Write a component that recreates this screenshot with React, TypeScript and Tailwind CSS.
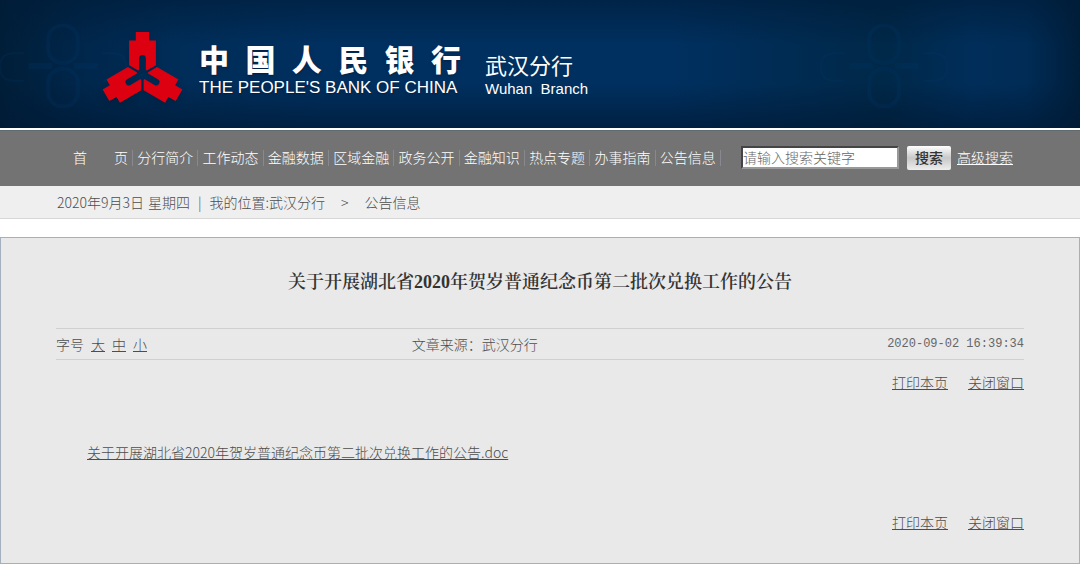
import { useState, type FormEvent } from 'react';

const navItems = ['分行简介', '工作动态', '金融数据', '区域金融', '政务公开', '金融知识', '热点专题', '办事指南', '公告信息'];
const bankName = ['中', '国', '人', '民', '银', '行'];
const fontSizes = ['大', '中', '小'];

// One arm of the emblem, repeated at 120 degree steps round the centre
const arm = 'M-20-126H20v25h20v74L14-12H10v-35q0-10-10-10t-10 10v35h-4L-40-27v-74h20z';

const Logo = () => (
  <svg viewBox="-121 -126 242 209" className="w-[81px] h-[70px] shrink-0 overflow-visible drop-shadow-md" role="img" aria-label="中国人民银行">
    <g fill="#dd0010">
      <path d={arm} />
      <path d={arm} transform="rotate(120)" />
      <path d={arm} transform="rotate(240)" />
    </g>
  </svg>
);

// Faint ornament in the banner background
const Rosette = ({ className }: { className: string }) => (
  <svg viewBox="-75 -65 150 130" className={`absolute top-0 h-[128px] w-[150px] ${className}`} aria-hidden="true">
    <g fill="none" stroke="#003a70" strokeWidth="4" opacity="0.2">
      <rect x="-15" y="-39" width="30" height="38" rx="14" />
      <rect x="-15" y="5" width="30" height="38" rx="14" />
      <path d="M-35 2h24M11 2h24" strokeWidth="6" />
      <path d="M-40-11h-10q-14 0-14 14t14 14h10M40-11h10q14 0 14 14T50 17H40" strokeWidth="2" />
    </g>
  </svg>
);

const Header = () => (
  <header className="relative overflow-hidden h-[130px] pt-1.5 pl-[102px] flex items-center border-b-2 border-white bg-[#002e5e] bg-[linear-gradient(to_bottom,#001c3899,transparent_35%,transparent_65%,#001a36b3),linear-gradient(to_right,#001e38,#00274c_8%,#002d58_16%,#003060_30%,#003060_62%,#002848_82%,#002e5a_90%,#002c56_95%,#001e3a)] text-white">
    <Rosette className="-left-3" />
    <Rosette className="right-[121px]" />
    <Logo />
    <div className="ml-4 mt-1.5 w-[262px] shrink-0">
      <div className="flex justify-between text-3xl leading-9 font-black text-shadow-md">
        {bankName.map((char) => <span key={char}>{char}</span>)}
      </div>
      <div className="text-[17px] leading-6 font-normal whitespace-nowrap text-shadow-md font-['Liberation_Sans',sans-serif]">THE PEOPLE'S BANK OF CHINA</div>
    </div>
    <div className="ml-6 mt-5 shrink-0 font-normal font-['Liberation_Sans','Noto_Sans_CJK_SC',sans-serif]">
      <div className="text-[22px] leading-6">武汉分行</div>
      <div className="text-[15px] leading-5 whitespace-pre">Wuhan  Branch</div>
    </div>
  </header>
);

const NavBar = () => {
  const [keyword, setKeyword] = useState('');

  const handleSubmit = (e: FormEvent) => {
    e.preventDefault();
  };

  return (
    <div className="h-14 pb-0.5 bg-[#737373] border-t border-[#5f6970] flex items-center pl-[73px] text-white font-['Liberation_Sans','Noto_Sans_CJK_SC',sans-serif]">
      <nav className="w-[648px] flex items-center shrink-0 leading-4">
        <a href="#" className="w-[60px] flex justify-between pr-1 border-r border-[#87898f]"><span>首</span><span>页</span></a>
        {navItems.map((item) => (
          <a key={item} href="#" className="flex-1 flex justify-center border-r border-[#87898f]">{item}</a>
        ))}
      </nav>
      <form onSubmit={handleSubmit} className="ml-5 flex items-center">
        <input
          type="text"
          aria-label="请输入搜索关键字"
          placeholder="请输入搜索关键字"
          value={keyword}
          onChange={(e) => setKeyword(e.target.value)}
          className="w-[158px] h-[23px] border-2 border-t-[#444] border-l-[#444] border-b-[#999] border-r-[#999] bg-white text-gray-700 placeholder:text-[#666]"
        />
        <button type="submit" className="ml-2 w-11 h-6 rounded-xs bg-linear-to-b from-white via-[#c8c8c8] to-[#eee] font-medium text-[#333]">搜索</button>
        <a href="#" className="ml-1.5 underline">高级搜索</a>
      </form>
    </div>
  );
};

const PageActions = () => (
  <div className="flex justify-end gap-5 leading-5">
    <a href="#" className="underline">打印本页</a>
    <a href="#" className="underline">关闭窗口</a>
  </div>
);

const Article = () => (
  <main className="mt-[18px] pb-[31px] border border-[#a5b0bf] bg-[#e9e9e9] px-[55px]">
    <h1 className="mt-[30px] text-center text-lg leading-7 font-semibold text-[#333] font-['Liberation_Serif','Noto_Serif_CJK_SC','Noto_Sans_CJK_SC',serif]">
      关于开展湖北省2020年贺岁普通纪念币第二批次兑换工作的公告
    </h1>
    <div className="mt-8 h-8 grid grid-cols-3 items-center border-y border-[#d0d0d0]">
      <div className="flex gap-[7px]">
        <span>字号</span>
        {fontSizes.map((size) => <button key={size} type="button" className="underline">{size}</button>)}
      </div>
      <div className="pl-[33px]">文章来源：武汉分行</div>
      <time className="text-right text-xs leading-5 text-[#666] font-['Liberation_Mono',monospace]">2020-09-02 16:39:34</time>
    </div>
    <div className="mt-3"><PageActions /></div>
    <a href="#" className="mt-[50px] ml-[31px] block w-fit leading-5 underline">
      关于开展湖北省2020年贺岁普通纪念币第二批次兑换工作的公告.doc
    </a>
    <div className="mt-[50px]"><PageActions /></div>
  </main>
);

const App = () => (
  <div className="min-w-[1024px] bg-white text-sm font-light text-[#4d4d4d] font-['Noto_Sans_CJK_SC','Liberation_Sans',sans-serif]">
    <Header />
    <NavBar />
    <div className="h-[33px] bg-[#efefef] border-b border-[#d6d6d6] flex items-center pl-[57px] whitespace-pre">
      <span>2020年9月3日</span>
      <span className="ml-1">星期四</span>
      <span className="mx-2">|</span>
      <span>我的位置:武汉分行</span>
      <span className="mx-4">&gt;</span>
      <span>公告信息</span>
    </div>
    <Article />
  </div>
);

export default App;
